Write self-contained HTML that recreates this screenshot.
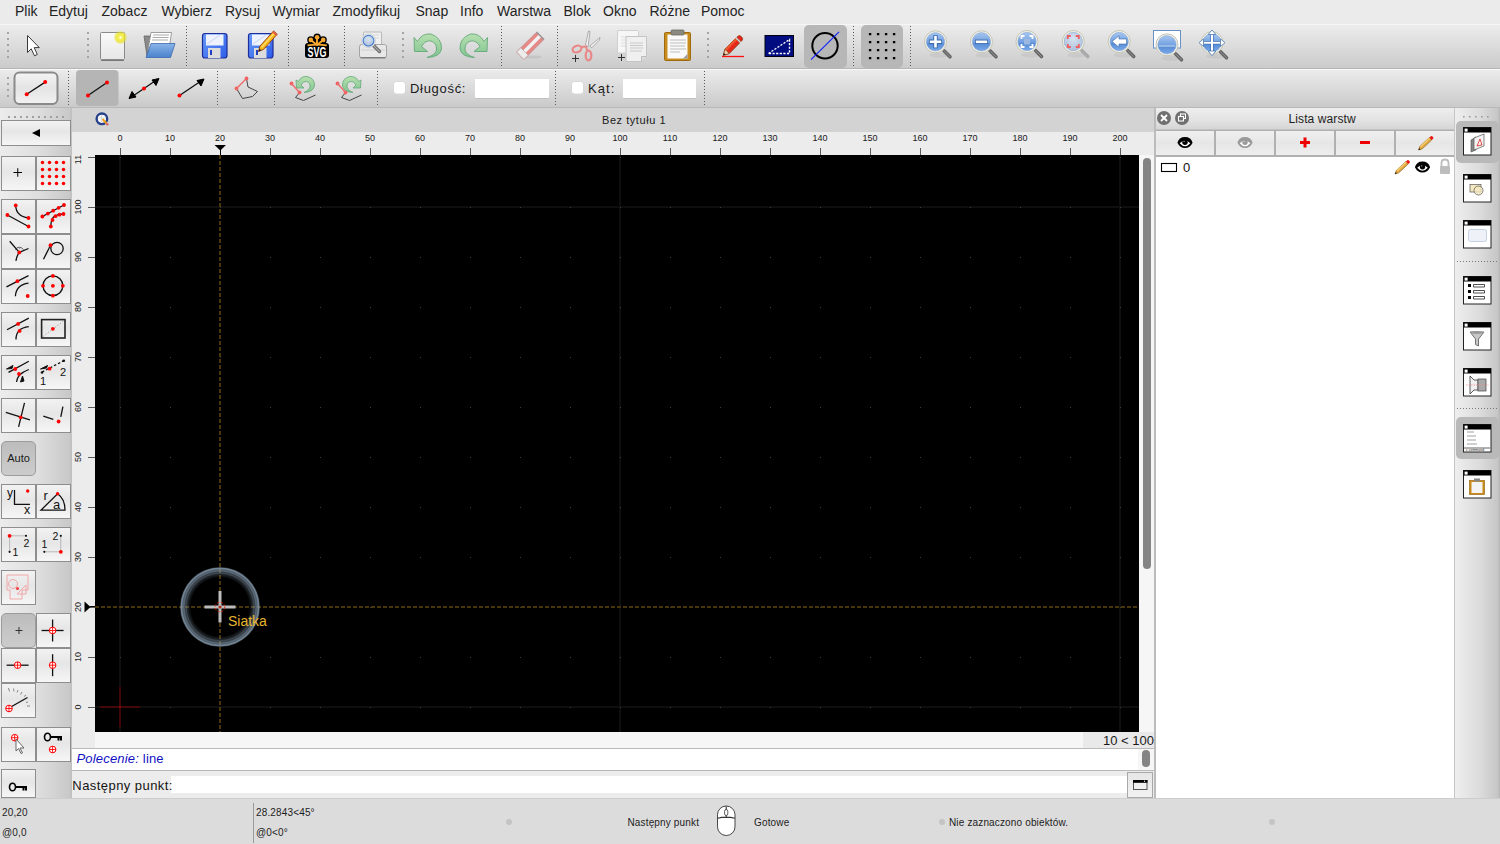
<!DOCTYPE html>
<html><head><meta charset="utf-8">
<style>
*{margin:0;padding:0;box-sizing:border-box}
html,body{width:1500px;height:844px;overflow:hidden;background:#ececec;font-family:"Liberation Sans",sans-serif;color:#222;position:relative}
.a{position:absolute}
#menu{left:0;top:0;width:1500px;height:24px;background:#ebebeb}
#menu span{position:absolute;top:3px;font-size:14px;line-height:16px;color:#232323;white-space:nowrap}
#tb1{left:0;top:24px;width:1500px;height:45px;background:linear-gradient(#f6f6f6 0px,#f6f6f6 1px,#ececec 1px,#cbcbcb 44px,#b6b6b6 44px,#b6b6b6 45px)}
#tb2{left:0;top:69px;width:1500px;height:39px;background:linear-gradient(#f8f8f8 0px,#f8f8f8 1px,#ebebeb 1px,#cacaca 38px,#b8b8b8 38px,#b8b8b8 39px)}
#ldock{left:0;top:108px;width:70px;height:690px;background:linear-gradient(90deg,#ececec,#dedede 55%,#c8c8c8)}
#ldockb{left:70px;top:108px;width:2px;height:690px;background:#c2c2c2}
#ctitle{left:72px;top:108px;width:1082px;height:24px;background:#d3d3d3}
#ruler{left:72px;top:132px;width:1082px;height:616px;background:#ececec}
#canvas{left:95px;top:155px;width:1044px;height:577px;background:#000;overflow:hidden}
#vscroll{left:1139px;top:155px;width:15px;height:577px;background:#f6f6f6}
#hbar{left:95px;top:732px;width:1059px;height:16px;background:#f6f6f6}
#cmdhist{left:72px;top:748px;width:1082px;height:23px;background:#fff;border-top:1px solid #b9b9b9;border-bottom:1px solid #b9b9b9}
#cmdin{left:72px;top:771px;width:1082px;height:27px;background:#ececec}
#cbord{left:1154px;top:108px;width:2px;height:690px;background:#bcbcbc}
#rdock{left:1156px;top:108px;width:298px;height:690px;background:#fff}
#rside{left:1454px;top:108px;width:46px;height:690px;background:linear-gradient(90deg,#f0f0f0,#e2e2e2 50%,#cccccc)}
#status{left:0;top:798px;width:1500px;height:46px;background:#dcdcdc;border-top:1px solid #cdcdcd}
.st{position:absolute;font-size:10px;line-height:12px;color:#1c1c1c;letter-spacing:0.15px;white-space:nowrap}
.rl{position:absolute;font-size:9px;line-height:10px;color:#1a1a1a;white-space:nowrap;text-align:center;width:30px}
.rlv{position:absolute;font-size:9px;line-height:10px;color:#1a1a1a;white-space:nowrap;text-align:center;width:30px;transform:rotate(-90deg)}
.btn{position:absolute;width:35px;height:35px;border:1px solid #8e8e8e;background:linear-gradient(#f2f2f2,#e6e6e6 45%,#f0f0f0 80%,#f6f6f6)}
</style></head><body>
<div id="menu" class="a">
<span style="left:15px">Plik</span>
<span style="left:49px">Edytuj</span>
<span style="left:101.5px">Zobacz</span>
<span style="left:161.5px">Wybierz</span>
<span style="left:225px">Rysuj</span>
<span style="left:272.5px">Wymiar</span>
<span style="left:332.5px">Zmodyfikuj</span>
<span style="left:415.5px">Snap</span>
<span style="left:460px">Info</span>
<span style="left:497px">Warstwa</span>
<span style="left:563.5px">Blok</span>
<span style="left:603px">Okno</span>
<span style="left:649.5px">Różne</span>
<span style="left:701px">Pomoc</span>
</div>
<div id="tb1" class="a"></div>
<div id="tb2" class="a"></div>
<div id="ldock" class="a"></div>
<div id="ldockb" class="a"></div>
<div id="ctitle" class="a"><span class="a" style="left:530px;top:6px;font-size:11px;line-height:12px;color:#1a1a1a;letter-spacing:0.55px">Bez tytułu 1</span></div>
<div id="ruler" class="a"></div>
<div id="canvas" class="a"></div>
<div id="vscroll" class="a"><div class="a" style="left:4px;top:3px;width:8px;height:411px;border-radius:4px;background:#848484"></div></div>
<div id="hbar" class="a"><div class="a" style="left:988px;top:0;width:71px;height:16px;background:#e9e9e9"></div><span class="a" style="right:0;top:1px;font-size:13px;line-height:15px;color:#1a1a1a">10 &lt; 100</span></div>
<div id="cmdhist" class="a"><span class="a" style="left:4.5px;top:2px;font-size:13px;line-height:16px;color:#1212c4;letter-spacing:0.18px"><i>Polecenie:</i> line</span>
<div class="a" style="left:1066px;top:0;width:16px;height:21px;background:#f6f6f6"></div>
<div class="a" style="left:1070px;top:1px;width:8px;height:17px;border-radius:4px;background:#848484"></div></div>
<div id="cmdin" class="a">
<div class="a" style="left:99px;top:5px;width:956px;height:17px;background:#fff"></div>
<span class="a" style="left:0.3px;top:7px;font-size:13px;line-height:15px;color:#141414;letter-spacing:0.44px">Następny punkt:</span>
<div class="a" style="left:1055px;top:1px;width:26px;height:26px;border:1px solid #a8a8a8;background:linear-gradient(#e6e6e6,#f2f2f2)"></div>
</div>
<div id="cbord" class="a"></div>
<div id="rdock" class="a"></div>
<div id="rside" class="a"></div>
<div id="status" class="a">
<span class="st" style="left:2px;top:8px">20,20</span>
<span class="st" style="left:2px;top:28px">@0,0</span>
<div class="a" style="left:253px;top:4px;width:1px;height:40px;background:#9a9a9a"></div>
<span class="st" style="left:256px;top:8px">28.2843&lt;45°</span>
<span class="st" style="left:256px;top:28px">@0&lt;0°</span>
<span class="st" style="left:627.5px;top:18px">Następny punkt</span>
<span class="st" style="left:754px;top:18px">Gotowe</span>
<span class="st" style="left:949px;top:18px">Nie zaznaczono obiektów.</span>
<div class="a" style="left:506px;top:20px;width:6px;height:6px;border-radius:3px;background:#c4c4c4"></div>
<div class="a" style="left:939px;top:20px;width:6px;height:6px;border-radius:3px;background:#c4c4c4"></div>
<div class="a" style="left:1269px;top:20px;width:6px;height:6px;border-radius:3px;background:#c4c4c4"></div>
</div>
<!--SVG1-->
<svg class="a" style="left:0;top:0" width="1500" height="844">
<defs>
<clipPath id="cv"><rect x="95" y="155" width="1044" height="577"/></clipPath>
<clipPath id="lr"><rect x="72" y="155" width="23" height="577"/></clipPath>
<radialGradient id="ring" cx="220" cy="607" r="40" gradientUnits="userSpaceOnUse">
<stop offset="0.73" stop-color="#8aa0b4" stop-opacity="0"/>
<stop offset="0.82" stop-color="#8aa0b4" stop-opacity="0.25"/>
<stop offset="0.9" stop-color="#8aa0b4" stop-opacity="0.5"/>
<stop offset="0.97" stop-color="#8aa0b4" stop-opacity="0.75"/>
<stop offset="1" stop-color="#8aa0b4" stop-opacity="0.3"/>
</radialGradient>
</defs>
<g font-family="Liberation Sans" font-size="9" fill="#1a1a1a">
<text x="120" y="141" text-anchor="middle">0</text>
<text x="170" y="141" text-anchor="middle">10</text>
<text x="220" y="141" text-anchor="middle">20</text>
<text x="270" y="141" text-anchor="middle">30</text>
<text x="320" y="141" text-anchor="middle">40</text>
<text x="370" y="141" text-anchor="middle">50</text>
<text x="420" y="141" text-anchor="middle">60</text>
<text x="470" y="141" text-anchor="middle">70</text>
<text x="520" y="141" text-anchor="middle">80</text>
<text x="570" y="141" text-anchor="middle">90</text>
<text x="620" y="141" text-anchor="middle">100</text>
<text x="670" y="141" text-anchor="middle">110</text>
<text x="720" y="141" text-anchor="middle">120</text>
<text x="770" y="141" text-anchor="middle">130</text>
<text x="820" y="141" text-anchor="middle">140</text>
<text x="870" y="141" text-anchor="middle">150</text>
<text x="920" y="141" text-anchor="middle">160</text>
<text x="970" y="141" text-anchor="middle">170</text>
<text x="1020" y="141" text-anchor="middle">180</text>
<text x="1070" y="141" text-anchor="middle">190</text>
<text x="1120" y="141" text-anchor="middle">200</text>
<path d="M120.5 148V155M170.5 148V155M220.5 148V155M270.5 148V155M320.5 148V155M370.5 148V155M420.5 148V155M470.5 148V155M520.5 148V155M570.5 148V155M620.5 148V155M670.5 148V155M720.5 148V155M770.5 148V155M820.5 148V155M870.5 148V155M920.5 148V155M970.5 148V155M1020.5 148V155M1070.5 148V155M1120.5 148V155" stroke="#5a5a5a" stroke-width="1"/>
<path d="M214.5 145H226L220.3 150.5Z" fill="#000"/><path d="M220.5 150V155" stroke="#000"/>
</g>
<g clip-path="url(#lr)" font-family="Liberation Sans" font-size="9" fill="#1a1a1a">
<text transform="translate(81,707) rotate(-90)" x="0" y="0" text-anchor="middle">0</text>
<text transform="translate(81,657) rotate(-90)" x="0" y="0" text-anchor="middle">10</text>
<text transform="translate(81,607) rotate(-90)" x="0" y="0" text-anchor="middle">20</text>
<text transform="translate(81,557) rotate(-90)" x="0" y="0" text-anchor="middle">30</text>
<text transform="translate(81,507) rotate(-90)" x="0" y="0" text-anchor="middle">40</text>
<text transform="translate(81,457) rotate(-90)" x="0" y="0" text-anchor="middle">50</text>
<text transform="translate(81,407) rotate(-90)" x="0" y="0" text-anchor="middle">60</text>
<text transform="translate(81,357) rotate(-90)" x="0" y="0" text-anchor="middle">70</text>
<text transform="translate(81,307) rotate(-90)" x="0" y="0" text-anchor="middle">80</text>
<text transform="translate(81,257) rotate(-90)" x="0" y="0" text-anchor="middle">90</text>
<text transform="translate(81,207) rotate(-90)" x="0" y="0" text-anchor="middle">100</text>
<text transform="translate(81,157) rotate(-90)" x="0" y="0" text-anchor="middle">110</text>
<path d="M88 707.5H95M88 657.5H95M88 607.5H95M88 557.5H95M88 507.5H95M88 457.5H95M88 407.5H95M88 357.5H95M88 307.5H95M88 257.5H95M88 207.5H95M88 157.5H95" stroke="#5a5a5a" stroke-width="1"/>
<path d="M84.5 601.5V612.5L90.5 607Z" fill="#000"/><path d="M90 606.5H95" stroke="#000"/>
</g>
<g clip-path="url(#cv)">
<path d="M120 155V732M620 155V732M1120 155V732M95 207H1139M95 707H1139" stroke="#0e0e0e" stroke-width="2"/>
<path d="M120 707h1v1h-1zM120 657h1v1h-1zM120 607h1v1h-1zM120 557h1v1h-1zM120 507h1v1h-1zM120 457h1v1h-1zM120 407h1v1h-1zM120 357h1v1h-1zM120 307h1v1h-1zM120 257h1v1h-1zM120 207h1v1h-1zM120 157h1v1h-1zM170 707h1v1h-1zM170 657h1v1h-1zM170 607h1v1h-1zM170 557h1v1h-1zM170 507h1v1h-1zM170 457h1v1h-1zM170 407h1v1h-1zM170 357h1v1h-1zM170 307h1v1h-1zM170 257h1v1h-1zM170 207h1v1h-1zM170 157h1v1h-1zM220 707h1v1h-1zM220 657h1v1h-1zM220 607h1v1h-1zM220 557h1v1h-1zM220 507h1v1h-1zM220 457h1v1h-1zM220 407h1v1h-1zM220 357h1v1h-1zM220 307h1v1h-1zM220 257h1v1h-1zM220 207h1v1h-1zM220 157h1v1h-1zM270 707h1v1h-1zM270 657h1v1h-1zM270 607h1v1h-1zM270 557h1v1h-1zM270 507h1v1h-1zM270 457h1v1h-1zM270 407h1v1h-1zM270 357h1v1h-1zM270 307h1v1h-1zM270 257h1v1h-1zM270 207h1v1h-1zM270 157h1v1h-1zM320 707h1v1h-1zM320 657h1v1h-1zM320 607h1v1h-1zM320 557h1v1h-1zM320 507h1v1h-1zM320 457h1v1h-1zM320 407h1v1h-1zM320 357h1v1h-1zM320 307h1v1h-1zM320 257h1v1h-1zM320 207h1v1h-1zM320 157h1v1h-1zM370 707h1v1h-1zM370 657h1v1h-1zM370 607h1v1h-1zM370 557h1v1h-1zM370 507h1v1h-1zM370 457h1v1h-1zM370 407h1v1h-1zM370 357h1v1h-1zM370 307h1v1h-1zM370 257h1v1h-1zM370 207h1v1h-1zM370 157h1v1h-1zM420 707h1v1h-1zM420 657h1v1h-1zM420 607h1v1h-1zM420 557h1v1h-1zM420 507h1v1h-1zM420 457h1v1h-1zM420 407h1v1h-1zM420 357h1v1h-1zM420 307h1v1h-1zM420 257h1v1h-1zM420 207h1v1h-1zM420 157h1v1h-1zM470 707h1v1h-1zM470 657h1v1h-1zM470 607h1v1h-1zM470 557h1v1h-1zM470 507h1v1h-1zM470 457h1v1h-1zM470 407h1v1h-1zM470 357h1v1h-1zM470 307h1v1h-1zM470 257h1v1h-1zM470 207h1v1h-1zM470 157h1v1h-1zM520 707h1v1h-1zM520 657h1v1h-1zM520 607h1v1h-1zM520 557h1v1h-1zM520 507h1v1h-1zM520 457h1v1h-1zM520 407h1v1h-1zM520 357h1v1h-1zM520 307h1v1h-1zM520 257h1v1h-1zM520 207h1v1h-1zM520 157h1v1h-1zM570 707h1v1h-1zM570 657h1v1h-1zM570 607h1v1h-1zM570 557h1v1h-1zM570 507h1v1h-1zM570 457h1v1h-1zM570 407h1v1h-1zM570 357h1v1h-1zM570 307h1v1h-1zM570 257h1v1h-1zM570 207h1v1h-1zM570 157h1v1h-1zM620 707h1v1h-1zM620 657h1v1h-1zM620 607h1v1h-1zM620 557h1v1h-1zM620 507h1v1h-1zM620 457h1v1h-1zM620 407h1v1h-1zM620 357h1v1h-1zM620 307h1v1h-1zM620 257h1v1h-1zM620 207h1v1h-1zM620 157h1v1h-1zM670 707h1v1h-1zM670 657h1v1h-1zM670 607h1v1h-1zM670 557h1v1h-1zM670 507h1v1h-1zM670 457h1v1h-1zM670 407h1v1h-1zM670 357h1v1h-1zM670 307h1v1h-1zM670 257h1v1h-1zM670 207h1v1h-1zM670 157h1v1h-1zM720 707h1v1h-1zM720 657h1v1h-1zM720 607h1v1h-1zM720 557h1v1h-1zM720 507h1v1h-1zM720 457h1v1h-1zM720 407h1v1h-1zM720 357h1v1h-1zM720 307h1v1h-1zM720 257h1v1h-1zM720 207h1v1h-1zM720 157h1v1h-1zM770 707h1v1h-1zM770 657h1v1h-1zM770 607h1v1h-1zM770 557h1v1h-1zM770 507h1v1h-1zM770 457h1v1h-1zM770 407h1v1h-1zM770 357h1v1h-1zM770 307h1v1h-1zM770 257h1v1h-1zM770 207h1v1h-1zM770 157h1v1h-1zM820 707h1v1h-1zM820 657h1v1h-1zM820 607h1v1h-1zM820 557h1v1h-1zM820 507h1v1h-1zM820 457h1v1h-1zM820 407h1v1h-1zM820 357h1v1h-1zM820 307h1v1h-1zM820 257h1v1h-1zM820 207h1v1h-1zM820 157h1v1h-1zM870 707h1v1h-1zM870 657h1v1h-1zM870 607h1v1h-1zM870 557h1v1h-1zM870 507h1v1h-1zM870 457h1v1h-1zM870 407h1v1h-1zM870 357h1v1h-1zM870 307h1v1h-1zM870 257h1v1h-1zM870 207h1v1h-1zM870 157h1v1h-1zM920 707h1v1h-1zM920 657h1v1h-1zM920 607h1v1h-1zM920 557h1v1h-1zM920 507h1v1h-1zM920 457h1v1h-1zM920 407h1v1h-1zM920 357h1v1h-1zM920 307h1v1h-1zM920 257h1v1h-1zM920 207h1v1h-1zM920 157h1v1h-1zM970 707h1v1h-1zM970 657h1v1h-1zM970 607h1v1h-1zM970 557h1v1h-1zM970 507h1v1h-1zM970 457h1v1h-1zM970 407h1v1h-1zM970 357h1v1h-1zM970 307h1v1h-1zM970 257h1v1h-1zM970 207h1v1h-1zM970 157h1v1h-1zM1020 707h1v1h-1zM1020 657h1v1h-1zM1020 607h1v1h-1zM1020 557h1v1h-1zM1020 507h1v1h-1zM1020 457h1v1h-1zM1020 407h1v1h-1zM1020 357h1v1h-1zM1020 307h1v1h-1zM1020 257h1v1h-1zM1020 207h1v1h-1zM1020 157h1v1h-1zM1070 707h1v1h-1zM1070 657h1v1h-1zM1070 607h1v1h-1zM1070 557h1v1h-1zM1070 507h1v1h-1zM1070 457h1v1h-1zM1070 407h1v1h-1zM1070 357h1v1h-1zM1070 307h1v1h-1zM1070 257h1v1h-1zM1070 207h1v1h-1zM1070 157h1v1h-1zM1120 707h1v1h-1zM1120 657h1v1h-1zM1120 607h1v1h-1zM1120 557h1v1h-1zM1120 507h1v1h-1zM1120 457h1v1h-1zM1120 407h1v1h-1zM1120 357h1v1h-1zM1120 307h1v1h-1zM1120 257h1v1h-1zM1120 207h1v1h-1zM1120 157h1v1h-1z" fill="#3e3e3e"/>
<path d="M100 707H140M120 687V727" stroke="#460707" stroke-width="1.8"/><circle cx="120" cy="707" r="1" fill="#7a1010"/>
<path d="M95 607H1139M220 155V732" stroke="#47360a" stroke-width="2" stroke-dasharray="4 2"/>
<circle cx="220" cy="607" r="40" fill="url(#ring)"/><circle cx="220" cy="607" r="38.6" fill="none" stroke="#7d92a4" stroke-width="1" opacity="0.7"/><circle cx="220" cy="607" r="36.2" fill="none" stroke="#7d92a4" stroke-width="0.8" opacity="0.5"/><circle cx="220" cy="607" r="33.8" fill="none" stroke="#7d92a4" stroke-width="0.7" opacity="0.35"/>
<path d="M204.5 607H235.5M220 591V622.5" stroke="#bdbdbd" stroke-width="3"/>
<circle cx="220" cy="607" r="4.8" fill="none" stroke="#d02810" stroke-width="1" stroke-dasharray="2.2 1.6"/>
<circle cx="220" cy="607" r="1.6" fill="#b03018"/>
<text x="228" y="625.5" font-family="Liberation Sans" font-size="14" fill="#e6b62e">Siatka</text>
</g>
<circle cx="101.9" cy="118.8" r="5.3" fill="#fafafa" stroke="#26408a" stroke-width="2.4"/><path d="M99 118H105M101.5 115V122" stroke="#c8c8c8" stroke-width="0.6"/><path d="M102.5 119L106.5 123.5" stroke="#f0a020" stroke-width="2"/><circle cx="107.3" cy="124.3" r="1.2" fill="#e06060"/>
<rect x="1133.5" y="780.5" width="13.5" height="9" fill="#f0f0f0" stroke="#555" stroke-width="1"/><rect x="1133" y="780" width="14.5" height="2.8" fill="#000"/><circle cx="1144.5" cy="781.2" r="0.6" fill="#fff"/>
<rect x="717.5" y="806" width="17.5" height="29.5" rx="8.7" fill="#fff" stroke="#333" stroke-width="0.9"/><path d="M717.6 818.2Q726.2 816 735 818.2M726.2 806.2V818" stroke="#333" stroke-width="1.1" fill="none"/><rect x="724.6" y="809.5" width="3.2" height="6" rx="1.6" fill="#fff" stroke="#333" stroke-width="0.8"/>
</svg>
<!--/SVG1-->
<div class="btn" style="left:1px;top:120px;width:70px;height:26px"></div>
<div class="btn" style="left:1px;top:156px;width:35px;height:35px"></div>
<div class="btn" style="left:36px;top:156px;width:35px;height:35px"></div>
<div class="btn" style="left:1px;top:199px;width:35px;height:35px"></div>
<div class="btn" style="left:36px;top:199px;width:35px;height:35px"></div>
<div class="btn" style="left:1px;top:234px;width:35px;height:35px"></div>
<div class="btn" style="left:36px;top:234px;width:35px;height:35px"></div>
<div class="btn" style="left:1px;top:269px;width:35px;height:35px"></div>
<div class="btn" style="left:36px;top:269px;width:35px;height:35px"></div>
<div class="btn" style="left:1px;top:312px;width:35px;height:35px"></div>
<div class="btn" style="left:36px;top:312px;width:35px;height:35px"></div>
<div class="btn" style="left:1px;top:355px;width:35px;height:35px"></div>
<div class="btn" style="left:36px;top:355px;width:35px;height:35px"></div>
<div class="btn" style="left:1px;top:398px;width:35px;height:35px"></div>
<div class="btn" style="left:36px;top:398px;width:35px;height:35px"></div>
<div class="btn" style="left:1px;top:484px;width:35px;height:35px"></div>
<div class="btn" style="left:36px;top:484px;width:35px;height:35px"></div>
<div class="btn" style="left:1px;top:527px;width:35px;height:35px"></div>
<div class="btn" style="left:36px;top:527px;width:35px;height:35px"></div>
<div class="btn" style="left:1px;top:648px;width:35px;height:35px"></div>
<div class="btn" style="left:36px;top:648px;width:35px;height:35px"></div>
<div class="btn" style="left:1px;top:727px;width:35px;height:35px"></div>
<div class="btn" style="left:36px;top:727px;width:35px;height:35px"></div>
<div class="btn" style="left:1px;top:570px;width:35px;height:35px"></div>
<div class="btn" style="left:36px;top:613px;width:35px;height:35px"></div>
<div class="btn" style="left:1px;top:683px;width:35px;height:35px"></div>
<div class="btn" style="left:1px;top:769px;width:35px;height:29px"></div>
<div class="a" style="left:1px;top:441px;width:35px;height:35px;border:1px solid #9c9c9c;border-radius:5px;background:linear-gradient(#bcbcbc,#c6c6c6 60%,#cccccc)"></div>
<div class="a" style="left:1px;top:613px;width:35px;height:35px;border:1px solid #9c9c9c;border-radius:5px;background:linear-gradient(#bcbcbc,#c6c6c6 60%,#cccccc)"></div>
<svg class="a" style="left:0;top:0" width="1500" height="844"><path d="M8 116h2v2h-2zM14 116h2v2h-2zM20 116h2v2h-2zM26 116h2v2h-2zM32 116h2v2h-2zM38 116h2v2h-2zM44 116h2v2h-2zM50 116h2v2h-2zM56 116h2v2h-2zM62 116h2v2h-2z" fill="#a0a0a0"/><path d="M32 133L40 129V137Z" fill="#000"/><g transform="translate(1,156)"><path d="M12.5 16.5H21M16.75 12.25V20.75" stroke="#000" stroke-width="1"/></g><g transform="translate(36,156)"><circle cx="6.5" cy="6.4" r="1.75" fill="#ff0000"/><circle cx="6.5" cy="13.4" r="1.75" fill="#ff0000"/><circle cx="6.5" cy="20.4" r="1.75" fill="#ff0000"/><circle cx="6.5" cy="27.4" r="1.75" fill="#ff0000"/><circle cx="13.5" cy="6.4" r="1.75" fill="#ff0000"/><circle cx="13.5" cy="13.4" r="1.75" fill="#ff0000"/><circle cx="13.5" cy="20.4" r="1.75" fill="#ff0000"/><circle cx="13.5" cy="27.4" r="1.75" fill="#ff0000"/><circle cx="20.5" cy="6.4" r="1.75" fill="#ff0000"/><circle cx="20.5" cy="13.4" r="1.75" fill="#ff0000"/><circle cx="20.5" cy="20.4" r="1.75" fill="#ff0000"/><circle cx="20.5" cy="27.4" r="1.75" fill="#ff0000"/><circle cx="27.5" cy="6.4" r="1.75" fill="#ff0000"/><circle cx="27.5" cy="13.4" r="1.75" fill="#ff0000"/><circle cx="27.5" cy="20.4" r="1.75" fill="#ff0000"/><circle cx="27.5" cy="27.4" r="1.75" fill="#ff0000"/></g><g transform="translate(1,199)"><path d="M6.4 16L27.5 27.5M14.7 6.4Q15 17 27.5 19" stroke="#111" stroke-width="1.3" fill="none"/><circle cx="6.4" cy="16" r="1.9" fill="#ff0000"/><circle cx="27.5" cy="27.5" r="1.9" fill="#ff0000"/><circle cx="14.7" cy="6.4" r="1.9" fill="#ff0000"/><circle cx="27.5" cy="19" r="1.9" fill="#ff0000"/></g><g transform="translate(36,199)"><path d="M6.4 17.5L28 6M14.8 27.5Q15 20 18 17.5Q22 15 27.5 15" stroke="#111" stroke-width="1.3" fill="none"/><circle cx="6.4" cy="17.5" r="1.9" fill="#ff0000"/><circle cx="11.8" cy="14.6" r="1.9" fill="#ff0000"/><circle cx="17.2" cy="11.7" r="1.9" fill="#ff0000"/><circle cx="22.6" cy="8.8" r="1.9" fill="#ff0000"/><circle cx="28" cy="6" r="1.9" fill="#ff0000"/><circle cx="14.8" cy="27.5" r="1.9" fill="#ff0000"/><circle cx="16.5" cy="21" r="1.9" fill="#ff0000"/><circle cx="19.5" cy="17.2" r="1.9" fill="#ff0000"/><circle cx="23.5" cy="15.7" r="1.9" fill="#ff0000"/><circle cx="27.5" cy="15" r="1.9" fill="#ff0000"/></g><g transform="translate(1,234)"><path d="M8.7 7.3L18.3 18.4M18.3 18.4Q16 21 14.9 26.9M18.3 18.4L27.5 14.5" stroke="#111" stroke-width="1.3" fill="none"/><path d="M14 15.5Q18.5 11 22.5 15.5" stroke="#222" stroke-width="0.7" fill="none"/><circle cx="18.5" cy="14.5" r="0.4" fill="#222"/><circle cx="18.3" cy="18.4" r="1.9" fill="#ff0000"/></g><g transform="translate(36,234)"><circle cx="21" cy="14.5" r="6.2" stroke="#111" stroke-width="1.3" fill="none"/><path d="M7.5 25.3L14.5 11.2" stroke="#111" stroke-width="1.3" fill="none"/><circle cx="14.5" cy="11.2" r="1.9" fill="#ff0000"/></g><g transform="translate(1,269)"><path d="M5.5 17.8L27.5 6.7M14.4 27.3Q15 16 27.5 14.2" stroke="#111" stroke-width="1.3" fill="none"/><circle cx="16.4" cy="12.2" r="1.9" fill="#ff0000"/><circle cx="26.7" cy="27" r="1.9" fill="#ff0000"/></g><g transform="translate(36,269)"><circle cx="16.9" cy="16.8" r="9.9" stroke="#111" stroke-width="1.3" fill="none"/><circle cx="16.9" cy="16.8" r="1.9" fill="#ff0000"/><circle cx="16.9" cy="6.9" r="1.9" fill="#ff0000"/><circle cx="16.9" cy="26.7" r="1.9" fill="#ff0000"/><circle cx="7" cy="16.8" r="1.9" fill="#ff0000"/><circle cx="26.8" cy="16.8" r="1.9" fill="#ff0000"/></g><g transform="translate(1,312)"><path d="M6 17.8L27.8 6.1M15 27.4Q15 16 27.8 14.6" stroke="#111" stroke-width="1.3" fill="none"/><circle cx="17.1" cy="11.9" r="1.9" fill="#ff0000"/><circle cx="18.6" cy="18.9" r="1.9" fill="#ff0000"/></g><g transform="translate(36,312)"><rect x="5.6" y="7.6" width="23.4" height="18.4" stroke="#222" stroke-width="1.6" fill="none"/><path d="M7 24.5L27.5 9" stroke="#999" stroke-width="0.8" stroke-dasharray="1.5 1.5"/><circle cx="16.9" cy="16.8" r="1.9" fill="#ff0000"/></g><g transform="translate(1,355)"><path d="M7.5 17.4L27.8 6.2M15.5 27Q16 19 27.8 14.5" stroke="#111" stroke-width="1.3" fill="none"/><path d="M5.5 14L12 10.5L11 13.5Z" fill="#111" stroke="#111"/><path d="M19.5 27L21.5 21L23 26Z" fill="#111" stroke="#111"/><circle cx="14.3" cy="14" r="1.9" fill="#ff0000"/><circle cx="18" cy="19" r="1.9" fill="#ff0000"/></g><g transform="translate(36,355)"><path d="M6 17L27.8 5.7" stroke="#111" stroke-width="1.3" stroke-dasharray="2.5 2"/><path d="M4.5 14L11.5 10.5L10.5 13Z" fill="#111" stroke="#111"/><circle cx="27.8" cy="5.7" r="1.3" fill="#111"/><circle cx="6" cy="17.5" r="1.3" fill="#111"/><circle cx="13.6" cy="13.7" r="1.9" fill="#ff0000"/><text x="24" y="20.5" font-size="11" font-family="Liberation Sans" fill="#111">2</text><text x="4" y="30" font-size="11" font-family="Liberation Sans" fill="#111">1</text></g><g transform="translate(1,398)"><path d="M4.8 14.4L28.9 21.8M23.5 4.8L17.6 28.9" stroke="#111" stroke-width="1.3" fill="none"/><circle cx="19.7" cy="19.3" r="1.9" fill="#ff0000"/></g><g transform="translate(36,398)"><path d="M7.3 18.2L17.3 21.4M26.9 8.6L24.8 18.8" stroke="#111" stroke-width="1.3" fill="none"/><circle cx="22.6" cy="23.5" r="1.9" fill="#ff0000"/></g><text x="18.5" y="462" text-anchor="middle" font-size="11" font-family="Liberation Sans" fill="#1a1a1a">Auto</text><g transform="translate(1,484)"><path d="M13.5 6V20.4H28.9" stroke="#111" stroke-width="1.3" fill="none"/><text x="6" y="12.5" font-size="12" font-family="Liberation Sans" fill="#111">y</text><text x="23" y="29.5" font-size="12.5" font-family="Liberation Sans" fill="#111">x</text><circle cx="26.7" cy="7" r="1.7" fill="#ff0000"/></g><g transform="translate(36,484)"><path d="M4.9 26.2L21.6 9.8Q29 15 29 26.2Z" stroke="#111" stroke-width="1.3" fill="none"/><text x="7.5" y="16" font-size="13" font-family="Liberation Sans" fill="#111">r</text><text x="17" y="25" font-size="13" font-family="Liberation Sans" fill="#111">a</text><circle cx="21.6" cy="9.8" r="1.7" fill="#ff0000"/></g><g transform="translate(1,527)"><path d="M8.6 8.8H25M8.6 8.8V24.8" stroke="#aaa" stroke-width="0.8" fill="none"/><circle cx="8.6" cy="8.8" r="1.9" fill="#ff0000"/><circle cx="25" cy="8.8" r="1.1" fill="#111"/><circle cx="8.6" cy="24.8" r="1.1" fill="#111"/><text x="22.5" y="20" font-size="10.5" font-family="Liberation Sans" fill="#111">2</text><text x="11.5" y="28.5" font-size="10.5" font-family="Liberation Sans" fill="#111">1</text></g><g transform="translate(36,527)"><path d="M24.8 8.8V24.8H8.3" stroke="#aaa" stroke-width="0.8" fill="none"/><circle cx="24.8" cy="24.8" r="1.9" fill="#ff0000"/><circle cx="24.8" cy="8.8" r="1.1" fill="#111"/><circle cx="8.3" cy="24.8" r="1.1" fill="#111"/><text x="16.5" y="13" font-size="10.5" font-family="Liberation Sans" fill="#111">2</text><text x="5.5" y="20.5" font-size="10.5" font-family="Liberation Sans" fill="#111">1</text></g><g transform="translate(1,570)"><path d="M6 5H27V20H21V29H9V20H6Z" fill="none" stroke="#f0a0a0" stroke-width="0.9"/><circle cx="12" cy="14" r="4.5" fill="none" stroke="#f0a0a0" stroke-width="0.9"/><path d="M16 24L25 15V24Z" fill="none" stroke="#f0a0a0" stroke-width="0.9"/><circle cx="16.5" cy="18.5" r="1.6" fill="#f04040"/></g><g transform="translate(1,613)"><path d="M14.5 17.5H21.5M18 14V21" stroke="#333" stroke-width="1"/></g><g transform="translate(36,613)"><path d="M5.600000000000001 17.5H27.6" stroke="#111" stroke-width="1.3"/><path d="M16.6 6.5V28.5" stroke="#111" stroke-width="1.3"/><circle cx="16.6" cy="17.5" r="3.3" fill="#fff" stroke="#ff0000" stroke-width="1"/><path d="M13.3 17.5H19.900000000000002M16.6 14.2V20.8" stroke="#ff0000" stroke-width="0.9"/></g><g transform="translate(1,648)"><path d="M5.600000000000001 17.2H27.6" stroke="#111" stroke-width="1.3"/><circle cx="16.6" cy="17.2" r="3.3" fill="#fff" stroke="#ff0000" stroke-width="1"/><path d="M13.3 17.2H19.900000000000002M16.6 13.899999999999999V20.5" stroke="#ff0000" stroke-width="0.9"/></g><g transform="translate(36,648)"><path d="M16.6 6.199999999999999V28.2" stroke="#111" stroke-width="1.3"/><circle cx="16.6" cy="17.2" r="3.3" fill="#fff" stroke="#ff0000" stroke-width="1"/><path d="M13.3 17.2H19.900000000000002M16.6 13.899999999999999V20.5" stroke="#ff0000" stroke-width="0.9"/></g><g transform="translate(1,683)"><path d="M8 25L26.5 14.5" stroke="#111" stroke-width="1.3"/><path d="M7.5 5L8.5 8.5M12.5 5.5L13 8.5M17 7L16 9.5M21 9L19.5 11.5M25 12L23 13.5M27 19L25 19.5M29 23H26" stroke="#888" stroke-width="1"/><circle cx="8" cy="25.5" r="3.3" fill="#fff" stroke="#ff0000" stroke-width="1"/><path d="M4.7 25.5H11.3M8 22.2V28.8" stroke="#ff0000" stroke-width="0.9"/></g><g transform="translate(1,727)"><circle cx="13.7" cy="10.7" r="3.3" fill="#fff" stroke="#ff0000" stroke-width="1"/><path d="M10.4 10.7H17M13.7 7.4V14" stroke="#ff0000" stroke-width="0.9"/><path d="M15 12V24L17.5 21.5L20 26.5L21.5 25.8L19 21H23Z" fill="#fff" stroke="#555" stroke-width="0.9"/></g><g transform="translate(36,727)"><g transform="translate(8,6)"><ellipse cx="3.5" cy="4" rx="3" ry="3.8" fill="none" stroke="#000" stroke-width="1.6"/><path d="M6.5 4H18M14.5 4V7.5M17 4V7.5" stroke="#000" stroke-width="2"/></g><circle cx="16.6" cy="22.5" r="3.3" fill="#fff" stroke="#ff0000" stroke-width="1"/><path d="M13.3 22.5H19.9M16.6 19.2V25.8" stroke="#ff0000" stroke-width="0.9"/></g><g transform="translate(1,769)"><g transform="translate(8,14)"><ellipse cx="3.5" cy="4" rx="3" ry="3.8" fill="none" stroke="#000" stroke-width="1.6"/><path d="M6.5 4H18M14.5 4V7.5M17 4V7.5" stroke="#000" stroke-width="2"/></g></g></svg>
<svg class="a" style="left:0;top:0" width="1500" height="110"><path d="M7 32h2v2h-2zM7 38h2v2h-2zM7 44h2v2h-2zM7 50h2v2h-2zM7 56h2v2h-2z" fill="#a4a4a4"/><path d="M87 32h2v2h-2zM87 38h2v2h-2zM87 44h2v2h-2zM87 50h2v2h-2zM87 56h2v2h-2z" fill="#a4a4a4"/><path d="M402 32h2v2h-2zM402 38h2v2h-2zM402 44h2v2h-2zM402 50h2v2h-2zM402 56h2v2h-2z" fill="#a4a4a4"/><path d="M707 32h2v2h-2zM707 38h2v2h-2zM707 44h2v2h-2zM707 50h2v2h-2zM707 56h2v2h-2z" fill="#a4a4a4"/><path d="M186 26h1v1h-1zM186 29h1v1h-1zM186 32h1v1h-1zM186 35h1v1h-1zM186 38h1v1h-1zM186 41h1v1h-1zM186 44h1v1h-1zM186 47h1v1h-1zM186 50h1v1h-1zM186 53h1v1h-1zM186 56h1v1h-1zM186 59h1v1h-1zM186 62h1v1h-1zM186 65h1v1h-1z" fill="#5a5a5a"/><path d="M288 26h1v1h-1zM288 29h1v1h-1zM288 32h1v1h-1zM288 35h1v1h-1zM288 38h1v1h-1zM288 41h1v1h-1zM288 44h1v1h-1zM288 47h1v1h-1zM288 50h1v1h-1zM288 53h1v1h-1zM288 56h1v1h-1zM288 59h1v1h-1zM288 62h1v1h-1zM288 65h1v1h-1z" fill="#5a5a5a"/><path d="M344 26h1v1h-1zM344 29h1v1h-1zM344 32h1v1h-1zM344 35h1v1h-1zM344 38h1v1h-1zM344 41h1v1h-1zM344 44h1v1h-1zM344 47h1v1h-1zM344 50h1v1h-1zM344 53h1v1h-1zM344 56h1v1h-1zM344 59h1v1h-1zM344 62h1v1h-1zM344 65h1v1h-1z" fill="#5a5a5a"/><path d="M501 26h1v1h-1zM501 29h1v1h-1zM501 32h1v1h-1zM501 35h1v1h-1zM501 38h1v1h-1zM501 41h1v1h-1zM501 44h1v1h-1zM501 47h1v1h-1zM501 50h1v1h-1zM501 53h1v1h-1zM501 56h1v1h-1zM501 59h1v1h-1zM501 62h1v1h-1zM501 65h1v1h-1z" fill="#5a5a5a"/><path d="M557 26h1v1h-1zM557 29h1v1h-1zM557 32h1v1h-1zM557 35h1v1h-1zM557 38h1v1h-1zM557 41h1v1h-1zM557 44h1v1h-1zM557 47h1v1h-1zM557 50h1v1h-1zM557 53h1v1h-1zM557 56h1v1h-1zM557 59h1v1h-1zM557 62h1v1h-1zM557 65h1v1h-1z" fill="#5a5a5a"/><path d="M853 26h1v1h-1zM853 29h1v1h-1zM853 32h1v1h-1zM853 35h1v1h-1zM853 38h1v1h-1zM853 41h1v1h-1zM853 44h1v1h-1zM853 47h1v1h-1zM853 50h1v1h-1zM853 53h1v1h-1zM853 56h1v1h-1zM853 59h1v1h-1zM853 62h1v1h-1zM853 65h1v1h-1z" fill="#5a5a5a"/><path d="M910 26h1v1h-1zM910 29h1v1h-1zM910 32h1v1h-1zM910 35h1v1h-1zM910 38h1v1h-1zM910 41h1v1h-1zM910 44h1v1h-1zM910 47h1v1h-1zM910 50h1v1h-1zM910 53h1v1h-1zM910 56h1v1h-1zM910 59h1v1h-1zM910 62h1v1h-1zM910 65h1v1h-1z" fill="#5a5a5a"/><rect x="804" y="25" width="43" height="43" rx="5" fill="#b7b7b7"/><rect x="861" y="25" width="42" height="43" rx="5" fill="#b7b7b7"/><path d="M27.5 35.5V52.5L31.2 48.8L34.5 55.8L37.3 54.5L34.2 47.6H39.3Z" fill="#fff" stroke="#3a3a3a" stroke-width="1" stroke-linejoin="round"/><defs><linearGradient id="pg" x1="0" y1="0" x2="0" y2="1"><stop offset="0" stop-color="#fafafa"/><stop offset="1" stop-color="#e6e6e6"/></linearGradient><radialGradient id="glow"><stop offset="0" stop-color="#fffff0"/><stop offset="0.35" stop-color="#f4ee40"/><stop offset="0.7" stop-color="#e8e020" stop-opacity="0.7"/><stop offset="1" stop-color="#e8e020" stop-opacity="0"/></radialGradient><linearGradient id="blu" x1="0" y1="0" x2="0" y2="1"><stop offset="0" stop-color="#8ab4e8"/><stop offset="1" stop-color="#4a82cc"/></linearGradient><linearGradient id="flop" x1="0" y1="0" x2="1" y2="1"><stop offset="0" stop-color="#6a9cf8"/><stop offset="1" stop-color="#2c5ce8"/></linearGradient><linearGradient id="zb" x1="0" y1="0" x2="0" y2="1"><stop offset="0" stop-color="#a8c6f0"/><stop offset="0.55" stop-color="#6e9ee0"/><stop offset="0.6" stop-color="#5a8cd6"/><stop offset="1" stop-color="#78aaea"/></linearGradient><radialGradient id="zr" cx="0.5" cy="0.35" r="0.7"><stop offset="0" stop-color="#d8e4f2"/><stop offset="1" stop-color="#a8bcd8"/></radialGradient><linearGradient id="grn" x1="0" y1="0" x2="0" y2="1"><stop offset="0" stop-color="#b8e0b0"/><stop offset="1" stop-color="#80c490"/></linearGradient></defs><rect x="100.5" y="32.5" width="24" height="27" rx="1" fill="url(#pg)" stroke="#8a8a8a"/><path d="M101 60.5H124" stroke="#777" stroke-width="1"/><circle cx="120.5" cy="37.5" r="7" fill="url(#glow)"/><path d="M144 36H152L154 38H164V56H147Z" fill="#8a8a8a" stroke="#666" stroke-width="0.8"/><path d="M151 32.5H171.5L169 50H148Z" fill="#fff" stroke="#888" stroke-width="0.8"/><path d="M153 35H169M152.5 37.5H168.5M152 40H168" stroke="#aaa" stroke-width="1"/><path d="M151 43.5H175L170.5 57.5H146Z" fill="url(#blu)" stroke="#3a6ab0" stroke-width="0.8"/><rect x="202.5" y="33.5" width="24.5" height="24.5" rx="2.5" fill="url(#flop)" stroke="#1c2c9c" stroke-width="1.2"/><rect x="206" y="34.5" width="17.5" height="11" fill="#eef2fc"/><path d="M207 44L220 35" stroke="#c8d4f4" stroke-width="1"/><rect x="208" y="48" width="12.5" height="10" fill="#dcdcdc"/><rect x="210" y="50" width="2" height="5" fill="#2040c0"/><rect x="248.5" y="33.5" width="24.5" height="24.5" rx="2.5" fill="url(#flop)" stroke="#1c2c9c" stroke-width="1.2"/><rect x="252" y="34.5" width="17.5" height="11" fill="#eef2fc"/><path d="M253 44L266 35" stroke="#c8d4f4" stroke-width="1"/><rect x="254" y="48" width="12.5" height="10" fill="#dcdcdc"/><rect x="256" y="50" width="2" height="5" fill="#2040c0"/><path d="M258.5 51.5L259.9 46.1L273.6 30.9L277.3 34.2L263.6 49.4Z" fill="#f6b418" stroke="#8a2a10" stroke-width="0.8" stroke-linejoin="round"/><path d="M261.5 47.5L275 32.5" stroke="#fce070" stroke-width="1.2"/><path d="M272.8 31.7L276.6 35.1" stroke="#e86040" stroke-width="2"/><path d="M258.5 51.5L259.3 48.6L261.3 50.4Z" fill="#222"/><rect x="305" y="43" width="24" height="15" rx="3" fill="#000"/><circle cx="317.1" cy="37.2" r="3.6" fill="#000"/><circle cx="310.8" cy="39.9" r="3.6" fill="#000"/><circle cx="323.2" cy="39.9" r="3.6" fill="#000"/><path d="M307 45L311 38L317 35L323 38L327 45Z" fill="#000"/><g stroke="#f7a830" stroke-width="1.9" stroke-linecap="round"><path d="M317 45V37.2M317 45L310.8 39.9M317 45L323.2 39.9"/></g><circle cx="317.1" cy="37.2" r="2.3" fill="#f7a830"/><circle cx="310.8" cy="39.9" r="2.3" fill="#f7a830"/><circle cx="323.2" cy="39.9" r="2.3" fill="#f7a830"/><path d="M307.5 45.3Q317 43.8 326.8 45.3" stroke="#f7a830" stroke-width="1.7" fill="none"/><text transform="translate(317,56.8) scale(0.64,1)" x="0" y="0" text-anchor="middle" font-family="Liberation Sans" font-weight="bold" font-size="14" fill="#fff">SVG</text><rect x="363.5" y="32" width="18" height="15" rx="1" fill="#f0f0f0" stroke="#b8b8b8"/><path d="M366 35H379M366 38H379" stroke="#d8d8d8"/><path d="M361.5 44.5H384.5Q386.5 44.5 386.5 47V56Q386.5 57.5 384.5 57.5H361.5Q359.5 57.5 359.5 56V47Q359.5 44.5 361.5 44.5Z" fill="#e8e8e8" stroke="#a4a4a4"/><path d="M361 50H385" stroke="#cfcfcf"/><path d="M360.5 57.8H385.5" stroke="#7a7a7a" stroke-width="1.4"/><path d="M373 45L379.5 51.5" stroke="#6a6a6a" stroke-width="3.4" stroke-linecap="round"/><path d="M373 45L379.5 51.5" stroke="#a8a8a8" stroke-width="1.2" stroke-linecap="round"/><circle cx="368.5" cy="40.7" r="6.9" fill="#fafafa" stroke="#c8c8c8" stroke-width="0.8"/><circle cx="368.5" cy="40.7" r="5.4" fill="url(#zr)" stroke="#4a80d0" stroke-width="1.2"/><path d="M414 37.5L414.5 51.5L427.5 51.5L421.5 46.5Q425 40 431 41Q437 43 436.5 50Q435.5 55 427 57.5Q440 57 441.5 49Q442 38 431 34Q422 33 417.5 41.5Z" fill="url(#grn)" stroke="#64a878" stroke-width="0.9" stroke-linejoin="round"/><path d="M487.5 37.5L487 51.5L474 51.5L480 46.5Q476.5 40 470.5 41Q464.5 43 465 50Q466 55 474.5 57.5Q461.5 57 460 49Q459.5 38 470.5 34Q479.5 33 484 41.5Z" fill="url(#grn)" stroke="#64a878" stroke-width="0.9" stroke-linejoin="round"/><ellipse cx="531" cy="57" rx="11" ry="1.6" fill="#000" opacity="0.07"/><path d="M530 33L546 33.5L534 56L518 52Z" fill="none"/><g transform="translate(530.5,45.5) rotate(-45)"><rect x="-14.5" y="-5.2" width="28.5" height="10.4" rx="1" fill="#e48888" stroke="#c88080" stroke-width="0.6"/><rect x="-14.5" y="-1.8" width="28.5" height="3.6" fill="#f2f0f0"/><rect x="-14.5" y="-5.2" width="6" height="10.4" fill="#ececec" stroke="#b89898" stroke-width="0.6"/><rect x="13" y="-5.2" width="1.5" height="10.4" fill="#999"/></g><path d="M588.5 31L585.5 45L588 47L590 31.5Z" fill="#f4f4f4" stroke="#9a9a9a" stroke-width="0.8"/><path d="M590 46L600 37.5L599.5 40L591.5 48Z" fill="#f4f4f4" stroke="#9a9a9a" stroke-width="0.8"/><ellipse cx="577" cy="49" rx="4.5" ry="3.2" fill="none" stroke="#e88888" stroke-width="2.2" transform="rotate(-20 577 49)"/><ellipse cx="588.5" cy="55.5" rx="2.8" ry="4.8" fill="none" stroke="#e88888" stroke-width="2.2"/><path d="M581 47L586 46.5L587 50.5" stroke="#e88888" stroke-width="2" fill="none"/><path d="M572 58.5H579M575.5 55V62" stroke="#333" stroke-width="1"/><path d="M617.5 30.5H637.5L638.5 31.5V53H617.5Z" fill="#f6f6f6" stroke="#d0d0d0"/><path d="M621 37H634M621 40H634M621 43H634M621 46H634" stroke="#dcdcdc"/><path d="M626 36.5H646.5V56.5L641.5 61.5H626Z" fill="#f0f0f0" stroke="#c4c4c4"/><path d="M630 43H643M630 45.5H643M630 48H643M630 51H642" stroke="#c8c8c8"/><path d="M641.5 61.5V56.5H646.5" fill="#ddd" stroke="#bbb"/><path d="M618 57.5H625M621.5 54V61" stroke="#333" stroke-width="1"/><rect x="664.5" y="32.5" width="26" height="28" rx="1" fill="#c88c1c" stroke="#a06a10"/><rect x="667.5" y="34.5" width="20" height="24" fill="#fafafa"/><rect x="671" y="30" width="13" height="5" rx="1" fill="#8a8a80" stroke="#6a6a60" stroke-width="0.8"/><path d="M670 40H686M670 43H686M670 46H685M670 49H686M670 52H680" stroke="#bdbdbd"/><path d="M683 58.5L687.5 54V58.5Z" fill="#999"/><path d="M722 56.5H744" stroke="#ff1010" stroke-width="1.3"/><g transform="translate(723.3,55.3) rotate(-45.5)"><path d="M0 0L5.5 -3H20.5V3H5.5Z" fill="#e82818" stroke="#7a4010" stroke-width="0.8" stroke-linejoin="round"/><path d="M5.5 -3H20.5V-0.8H5.5Z" fill="#f05830"/><path d="M0 0L5.5 -3V3Z" fill="#f0d0b0" stroke="#7a4010" stroke-width="0.6"/><path d="M0 0L2 -1.1V1.1Z" fill="#111"/><rect x="20.5" y="-3" width="1.8" height="6" fill="#d8d8d8"/><path d="M22.3 -3H23.5Q26 -3 26 0Q26 3 23.5 3H22.3Z" fill="#f02020" stroke="#7a4010" stroke-width="0.7"/></g><rect x="765" y="35.5" width="28.5" height="21" fill="#000c80" stroke="#001"/><path d="M768.5 53.5L789.5 39.5V53.5Z" fill="none" stroke="#fff" stroke-width="1.4" stroke-dasharray="2.2 1.4"/><circle cx="825" cy="45.8" r="12.7" fill="none" stroke="#000" stroke-width="2"/><path d="M811 59.7L839 31.8" stroke="#1020ff" stroke-width="1.1"/><path d="M868.9 32.9h2.4v2.4h-2.4zM868.9 40.9h2.4v2.4h-2.4zM868.9 48.9h2.4v2.4h-2.4zM868.9 56.9h2.4v2.4h-2.4zM876.9 32.9h2.4v2.4h-2.4zM876.9 40.9h2.4v2.4h-2.4zM876.9 48.9h2.4v2.4h-2.4zM876.9 56.9h2.4v2.4h-2.4zM884.9 32.9h2.4v2.4h-2.4zM884.9 40.9h2.4v2.4h-2.4zM884.9 48.9h2.4v2.4h-2.4zM884.9 56.9h2.4v2.4h-2.4zM892.9 32.9h2.4v2.4h-2.4zM892.9 40.9h2.4v2.4h-2.4zM892.9 48.9h2.4v2.4h-2.4zM892.9 56.9h2.4v2.4h-2.4z" fill="#000"/><ellipse cx="939.5" cy="55.3" rx="10" ry="2.5" fill="#000" opacity="0.05"/><path d="M944.0 50.8L950.0 56.8" stroke="#666" stroke-width="3.6" stroke-linecap="round"/><path d="M944.0 50.8L950.0 56.8" stroke="#b0b0b0" stroke-width="1" stroke-linecap="round" opacity="0.6"/><circle cx="935.5" cy="41.8" r="11" fill="#f4f4ec" stroke="#c4c4b4" stroke-width="1"/><circle cx="935.5" cy="41.8" r="9.2" fill="url(#zb)" stroke="#8aa8d0" stroke-width="0.6"/><path d="M929 41.8H942M935.5 35.3V48.3" stroke="#3a6aa8" stroke-width="4.4"/><path d="M929.8 41.8H941.2M935.5 36.1V47.5" stroke="#fff" stroke-width="2.6"/><ellipse cx="985.5" cy="55.3" rx="10" ry="2.5" fill="#000" opacity="0.05"/><path d="M990.0 50.8L996.0 56.8" stroke="#666" stroke-width="3.6" stroke-linecap="round"/><path d="M990.0 50.8L996.0 56.8" stroke="#b0b0b0" stroke-width="1" stroke-linecap="round" opacity="0.6"/><circle cx="981.5" cy="41.8" r="11" fill="#f4f4ec" stroke="#c4c4b4" stroke-width="1"/><circle cx="981.5" cy="41.8" r="9.2" fill="url(#zb)" stroke="#8aa8d0" stroke-width="0.6"/><path d="M975 41.8H988" stroke="#3a6aa8" stroke-width="4.4"/><path d="M975.8 41.8H987.2" stroke="#fff" stroke-width="2.6"/><ellipse cx="1031" cy="55.0" rx="10" ry="2.5" fill="#000" opacity="0.05"/><path d="M1035.5 50.5L1041.5 56.5" stroke="#666" stroke-width="3.6" stroke-linecap="round"/><path d="M1035.5 50.5L1041.5 56.5" stroke="#b0b0b0" stroke-width="1" stroke-linecap="round" opacity="0.6"/><circle cx="1027" cy="41.5" r="11" fill="#f4f4ec" stroke="#c4c4b4" stroke-width="1"/><circle cx="1027" cy="41.5" r="9.2" fill="url(#zb)" stroke="#8aa8d0" stroke-width="0.6"/><path d="M1021.5 39V36H1024.5M1029.5 36H1032.5V39M1032.5 44V47H1029.5M1024.5 47H1021.5V44" stroke="#fff" stroke-width="1.8" fill="none"/><rect x="1024" y="38.5" width="6" height="6" fill="#9ab8e0"/><ellipse cx="1077.3" cy="55.0" rx="10" ry="2.5" fill="#000" opacity="0.05"/><path d="M1081.8 50.5L1087.8 56.5" stroke="#aaa" stroke-width="3.6" stroke-linecap="round"/><path d="M1081.8 50.5L1087.8 56.5" stroke="#b0b0b0" stroke-width="1" stroke-linecap="round" opacity="0.6"/><circle cx="1073.3" cy="41.5" r="11" fill="#f4f4ec" stroke="#c4c4b4" stroke-width="1"/><circle cx="1073.3" cy="41.5" r="9.2" fill="url(#zr)" stroke="#8aa8d0" stroke-width="0.6"/><path d="M1067.8 39V36H1070.8M1075.8 36H1078.8V39M1078.8 44V47H1075.8M1070.8 47H1067.8V44" stroke="#f06060" stroke-width="1.8" fill="none"/><ellipse cx="1123.2" cy="55.0" rx="10" ry="2.5" fill="#000" opacity="0.05"/><path d="M1127.7 50.5L1133.7 56.5" stroke="#666" stroke-width="3.6" stroke-linecap="round"/><path d="M1127.7 50.5L1133.7 56.5" stroke="#b0b0b0" stroke-width="1" stroke-linecap="round" opacity="0.6"/><circle cx="1119.2" cy="41.5" r="11" fill="#f4f4ec" stroke="#c4c4b4" stroke-width="1"/><circle cx="1119.2" cy="41.5" r="9.2" fill="url(#zb)" stroke="#8aa8d0" stroke-width="0.6"/><path d="M1112 41.5L1119 35.8V39H1126.5V44H1119V47.2Z" fill="#fff" stroke="#3a6aa8" stroke-width="0.6"/><rect x="1153.5" y="30.5" width="27" height="17.5" fill="#fff" stroke="#6a90c8"/><ellipse cx="1171" cy="58.3" rx="10" ry="2.5" fill="#000" opacity="0.05"/><path d="M1175.5 53.8L1181.5 59.8" stroke="#666" stroke-width="3.6" stroke-linecap="round"/><path d="M1175.5 53.8L1181.5 59.8" stroke="#b0b0b0" stroke-width="1" stroke-linecap="round" opacity="0.6"/><circle cx="1167" cy="44.8" r="11" fill="#f4f4ec" stroke="#c4c4b4" stroke-width="1"/><circle cx="1167" cy="44.8" r="9.2" fill="url(#zb)" stroke="#8aa8d0" stroke-width="0.6"/><path d="M1159 46H1175" stroke="#a8c4ea" stroke-width="1.5"/><ellipse cx="1216" cy="56.2" rx="10" ry="2.5" fill="#000" opacity="0.05"/><path d="M1220.5 51.7L1226.5 57.7" stroke="#666" stroke-width="3.6" stroke-linecap="round"/><path d="M1220.5 51.7L1226.5 57.7" stroke="#b0b0b0" stroke-width="1" stroke-linecap="round" opacity="0.6"/><circle cx="1212" cy="42.7" r="11" fill="#f4f4ec" stroke="#c4c4b4" stroke-width="1"/><circle cx="1212" cy="42.7" r="9.2" fill="url(#zb)" stroke="#8aa8d0" stroke-width="0.6"/><path d="M1212 33.5V52M1203 42.7H1221" stroke="#3a6aa8" stroke-width="3.2"/><path d="M1212 33.5V52M1203 42.7H1221" stroke="#fff" stroke-width="2"/><path d="M1212 30L1208.2 34.5H1215.8ZM1212 55.6L1208.2 51H1215.8ZM1199 42.7L1203.5 38.9V46.5ZM1225 42.7L1220.5 38.9V46.5Z" fill="#fff" stroke="#3a6aa8" stroke-width="0.7" stroke-linejoin="round"/><path d="M7 77h2v2h-2zM7 83h2v2h-2zM7 89h2v2h-2zM7 95h2v2h-2z" fill="#a4a4a4"/><path d="M68 71h1v1h-1zM68 74h1v1h-1zM68 77h1v1h-1zM68 80h1v1h-1zM68 83h1v1h-1zM68 86h1v1h-1zM68 89h1v1h-1zM68 92h1v1h-1zM68 95h1v1h-1zM68 98h1v1h-1zM68 101h1v1h-1zM68 104h1v1h-1z" fill="#5a5a5a"/><path d="M217 71h1v1h-1zM217 74h1v1h-1zM217 77h1v1h-1zM217 80h1v1h-1zM217 83h1v1h-1zM217 86h1v1h-1zM217 89h1v1h-1zM217 92h1v1h-1zM217 95h1v1h-1zM217 98h1v1h-1zM217 101h1v1h-1zM217 104h1v1h-1z" fill="#5a5a5a"/><path d="M274 71h1v1h-1zM274 74h1v1h-1zM274 77h1v1h-1zM274 80h1v1h-1zM274 83h1v1h-1zM274 86h1v1h-1zM274 89h1v1h-1zM274 92h1v1h-1zM274 95h1v1h-1zM274 98h1v1h-1zM274 101h1v1h-1zM274 104h1v1h-1z" fill="#5a5a5a"/><path d="M377 71h1v1h-1zM377 74h1v1h-1zM377 77h1v1h-1zM377 80h1v1h-1zM377 83h1v1h-1zM377 86h1v1h-1zM377 89h1v1h-1zM377 92h1v1h-1zM377 95h1v1h-1zM377 98h1v1h-1zM377 101h1v1h-1zM377 104h1v1h-1z" fill="#5a5a5a"/><path d="M555 71h1v1h-1zM555 74h1v1h-1zM555 77h1v1h-1zM555 80h1v1h-1zM555 83h1v1h-1zM555 86h1v1h-1zM555 89h1v1h-1zM555 92h1v1h-1zM555 95h1v1h-1zM555 98h1v1h-1zM555 101h1v1h-1zM555 104h1v1h-1z" fill="#5a5a5a"/><path d="M704 71h1v1h-1zM704 74h1v1h-1zM704 77h1v1h-1zM704 80h1v1h-1zM704 83h1v1h-1zM704 86h1v1h-1zM704 89h1v1h-1zM704 92h1v1h-1zM704 95h1v1h-1zM704 98h1v1h-1zM704 101h1v1h-1zM704 104h1v1h-1z" fill="#5a5a5a"/><rect x="14.5" y="72.5" width="43" height="31.5" rx="5" fill="url(#btg)" stroke="#8a8a8a" stroke-width="2"/><defs><linearGradient id="btg" x1="0" y1="0" x2="0" y2="1"><stop offset="0" stop-color="#f4f4f4"/><stop offset="0.5" stop-color="#e4e4e4"/><stop offset="1" stop-color="#f2f2f2"/></linearGradient></defs><rect x="76" y="70" width="42.5" height="36" rx="4" fill="#b5b5b5"/><path d="M26.7 94.2L45.2 82.1" stroke="#111" stroke-width="1.3"/><circle cx="26.7" cy="94.2" r="2" fill="#ff0000"/><circle cx="45.2" cy="82.1" r="2" fill="#ff0000"/><path d="M88 95.5L107 82.5" stroke="#111" stroke-width="1.3"/><circle cx="88" cy="95.5" r="2" fill="#ff0000"/><circle cx="107" cy="82.5" r="2" fill="#ff0000"/><path d="M133 96L155 81" stroke="#111" stroke-width="1.3"/><path d="M129 98.5L132 91.5L136 97Z M159 78.5L156 85.5L152 80Z" fill="#000" stroke="#000" stroke-width="1"/><circle cx="144" cy="88.5" r="2" fill="#ff0000"/><path d="M179.5 95.5L201 81" stroke="#111" stroke-width="1.3"/><path d="M204 79L201 86L197 80.5Z" fill="#000" stroke="#000" stroke-width="1"/><circle cx="179.5" cy="95.5" r="2" fill="#ff0000"/><path d="M236.5 88.5L246.5 78.5" stroke="#f06464" stroke-width="1.2"/><path d="M236.5 88.5L242.5 98.5L252.5 96.5L257.5 91.5L248 87L246.5 78.5" stroke="#444" stroke-width="1" fill="none"/><circle cx="236.5" cy="88.5" r="1.9" fill="#f06464"/><circle cx="246.5" cy="78.5" r="1.9" fill="#f06464"/><path d="M299.5 92.5L295.5 97.5L303.5 100.5L315.5 95" stroke="#444" stroke-width="1" fill="none"/><path transform="translate(296,75)" d="M0 5L0.5 13L8 13L5 10Q7 6 10.5 6.5Q14.5 7.5 14 12Q13 16 8 17.5Q17 17 18.5 11Q19 3 11 1.5Q5 1 2.5 6.5Z" fill="url(#grn)" stroke="#64a878" stroke-width="0.8"/><path d="M291.5 83.5L299.5 92.5" stroke="#f06464" stroke-width="1.2"/><circle cx="291.5" cy="83.5" r="1.9" fill="#f06464"/><circle cx="299.5" cy="92.5" r="1.9" fill="#f06464"/><path d="M345.5 92.5L341.5 97.5L349.5 100.5L361.5 95" stroke="#444" stroke-width="1" fill="none"/><path transform="translate(361,75) scale(-1,1)" d="M0 5L0.5 13L8 13L5 10Q7 6 10.5 6.5Q14.5 7.5 14 12Q13 16 8 17.5Q17 17 18.5 11Q19 3 11 1.5Q5 1 2.5 6.5Z" fill="url(#grn)" stroke="#64a878" stroke-width="0.8"/><path d="M337.5 83.5L345.5 92.5" stroke="#f06464" stroke-width="1.2"/><circle cx="337.5" cy="83.5" r="1.9" fill="#f06464"/><circle cx="345.5" cy="92.5" r="1.9" fill="#f06464"/><rect x="393.5" y="81.5" width="12" height="12.5" rx="3" fill="#fff" stroke="#d8d8d8" stroke-width="1"/><rect x="571.5" y="81.5" width="12" height="12.5" rx="3" fill="#fff" stroke="#d8d8d8" stroke-width="1"/><rect x="475" y="79" width="74" height="19.5" fill="#fff"/><path d="M475 98.5H549" stroke="#c0c0c0"/><rect x="623" y="79" width="73" height="19.5" fill="#fff"/><path d="M623 98.5H696" stroke="#c0c0c0"/><text x="410" y="92.5" font-family="Liberation Sans" font-size="13" letter-spacing="0.7" fill="#1a1a1a">Długość:</text><text x="588" y="92.5" font-family="Liberation Sans" font-size="13" letter-spacing="1.1" fill="#1a1a1a">Kąt:</text></svg>
<div class="a" style="left:1156px;top:108px;width:298px;height:22px;background:linear-gradient(#eeeeee,#e2e2e2 60%,#d6d6d6);border-bottom:1px solid #c2c2c2"></div>
<div class="a" style="left:1156px;top:130px;width:298px;height:27px;background:#b0b0b0"></div>
<div class="a" style="left:1156px;top:131px;width:58px;height:24px;background:linear-gradient(#f0f0f0,#e6e6e6 50%,#eeeeee)"></div>
<div class="a" style="left:1216px;top:131px;width:58px;height:24px;background:linear-gradient(#f0f0f0,#e6e6e6 50%,#eeeeee)"></div>
<div class="a" style="left:1276px;top:131px;width:58px;height:24px;background:linear-gradient(#f0f0f0,#e6e6e6 50%,#eeeeee)"></div>
<div class="a" style="left:1336px;top:131px;width:58px;height:24px;background:linear-gradient(#f0f0f0,#e6e6e6 50%,#eeeeee)"></div>
<div class="a" style="left:1396px;top:131px;width:58px;height:24px;background:linear-gradient(#f0f0f0,#e6e6e6 50%,#eeeeee)"></div>
<span class="a" style="left:1288.5px;top:112px;font-size:12px;line-height:14px;color:#1e1e1e;letter-spacing:0.1px">Lista warstw</span>
<span class="a" style="left:1183px;top:160px;font-size:13px;line-height:15px;color:#111">0</span>
<div class="a" style="left:1454px;top:108px;width:1px;height:690px;background:#c6c6c6"></div>
<div class="a" style="left:1455px;top:108px;width:45px;height:690px;background:linear-gradient(90deg,#eeeeee,#dcdcdc 55%,#c6c6c6 95%,#b4b4b4)"></div>
<svg class="a" style="left:0;top:0" width="1500" height="844"><circle cx="1164" cy="118" r="7" fill="#707070"/><path d="M1161 115L1167 121M1167 115L1161 121" stroke="#fff" stroke-width="1.8"/><circle cx="1182" cy="118" r="7" fill="#707070"/><rect x="1180.5" y="114" width="5" height="4.5" fill="none" stroke="#fff" stroke-width="1.1"/><rect x="1178.5" y="116.5" width="5" height="4.5" fill="#707070" stroke="#fff" stroke-width="1.1"/><path d="M1177.4 142.8Q1179 136.9 1185 136.9Q1191 136.9 1192.6 142.8Q1190 148.1 1185 148.1Q1180 148.1 1177.4 142.8Z" fill="#000"/><path d="M1179.7 143.3Q1185 137.5 1190.3 143.3Q1185 149.3 1179.7 143.3Z" fill="#fff"/><circle cx="1185" cy="142.3" r="2.7" fill="#000"/><circle cx="1184.1" cy="141.4" r="0.7" fill="#fff" opacity="0.6"/><path d="M1237.4 142.8Q1239 136.9 1245 136.9Q1251 136.9 1252.6 142.8Q1250 148.1 1245 148.1Q1240 148.1 1237.4 142.8Z" fill="#9a9a9a"/><path d="M1239.7 143.3Q1245 137.5 1250.3 143.3Q1245 149.3 1239.7 143.3Z" fill="#fff"/><circle cx="1245" cy="142.3" r="2.7" fill="#9a9a9a"/><circle cx="1244.1" cy="141.4" r="0.7" fill="#fff" opacity="0.6"/><path d="M1300 142.5H1310M1305 137.5V147.5" stroke="#ee0000" stroke-width="3"/><path d="M1360 142.5H1370" stroke="#ee0000" stroke-width="3"/><g transform="translate(1418.5,150) rotate(-43)"><path d="M0 0L3.5 -1.7H16.5V1.7H3.5Z" fill="#e0a840" stroke="#8a5a10" stroke-width="0.6"/><path d="M3.5 -1.7H16.5V-0.3H3.5Z" fill="#f4cc70"/><path d="M16.5 -1.7H18.5Q19.5 -1.7 19.5 0Q19.5 1.7 18.5 1.7H16.5Z" fill="#e81818"/><path d="M0 0L1.8 -0.9V0.9Z" fill="#222"/></g><g transform="translate(1395,174) rotate(-43)"><path d="M0 0L3.5 -1.7H16.5V1.7H3.5Z" fill="#e0a840" stroke="#8a5a10" stroke-width="0.6"/><path d="M3.5 -1.7H16.5V-0.3H3.5Z" fill="#f4cc70"/><path d="M16.5 -1.7H18.5Q19.5 -1.7 19.5 0Q19.5 1.7 18.5 1.7H16.5Z" fill="#e81818"/><path d="M0 0L1.8 -0.9V0.9Z" fill="#222"/></g><path d="M1414.9 167.3Q1416.5 161.4 1422.5 161.4Q1428.5 161.4 1430.1 167.3Q1427.5 172.6 1422.5 172.6Q1417.5 172.6 1414.9 167.3Z" fill="#000"/><path d="M1417.2 167.8Q1422.5 162 1427.8 167.8Q1422.5 173.8 1417.2 167.8Z" fill="#fff"/><circle cx="1422.5" cy="166.8" r="2.7" fill="#000"/><circle cx="1421.6" cy="165.9" r="0.7" fill="#fff" opacity="0.6"/><path d="M1441.5 167V163Q1441.5 159.5 1445 159.5Q1448.5 159.5 1448.5 163V167" fill="none" stroke="#bdbdbd" stroke-width="1.8"/><rect x="1440" y="166" width="10" height="8" rx="1" fill="#bdbdbd"/><rect x="1161.5" y="163.5" width="15" height="8" fill="none" stroke="#000" stroke-width="1.1"/><path d="M1463 116h1.6v1.6h-1.6zM1469 116h1.6v1.6h-1.6zM1475 116h1.6v1.6h-1.6zM1481 116h1.6v1.6h-1.6zM1487 116h1.6v1.6h-1.6z" fill="#9a9a9a"/><rect x="1456" y="121" width="43" height="42" rx="5" fill="#b9b9b9"/><rect x="1456" y="417" width="43" height="42" rx="5" fill="#b9b9b9"/><path d="M1457 261h1v1h-1zM1460 261h1v1h-1zM1463 261h1v1h-1zM1466 261h1v1h-1zM1469 261h1v1h-1zM1472 261h1v1h-1zM1475 261h1v1h-1zM1478 261h1v1h-1zM1481 261h1v1h-1zM1484 261h1v1h-1zM1487 261h1v1h-1zM1490 261h1v1h-1zM1493 261h1v1h-1zM1496 261h1v1h-1z" fill="#777"/><path d="M1457 408h1v1h-1zM1460 408h1v1h-1zM1463 408h1v1h-1zM1466 408h1v1h-1zM1469 408h1v1h-1zM1472 408h1v1h-1zM1475 408h1v1h-1zM1478 408h1v1h-1zM1481 408h1v1h-1zM1484 408h1v1h-1zM1487 408h1v1h-1zM1490 408h1v1h-1zM1493 408h1v1h-1zM1496 408h1v1h-1z" fill="#777"/><rect x="1463.5" y="127.5" width="27.5" height="27.5" fill="#fff" stroke="#222" stroke-width="1"/><rect x="1463.5" y="127.5" width="27.5" height="5" fill="#000"/><rect x="1464.6" y="128.6" width="3" height="3" fill="#fff"/><path d="M1471 140L1476 137V150L1471 152Z" fill="#888" stroke="#444" stroke-width="0.6"/><path d="M1474 138L1484 134V146L1474 150Z" fill="#f4f4f4" stroke="#555" stroke-width="0.7"/><path d="M1477 146L1480 139L1482 145Z" fill="none" stroke="#e02020" stroke-width="0.8"/><rect x="1463.5" y="174.5" width="27.5" height="27.5" fill="#fff" stroke="#222" stroke-width="1"/><rect x="1463.5" y="174.5" width="27.5" height="5" fill="#000"/><rect x="1464.6" y="175.6" width="3" height="3" fill="#fff"/><rect x="1470" y="184.5" width="11" height="7.5" fill="#f4e8c0" stroke="#555" stroke-width="0.7"/><circle cx="1478.5" cy="190.5" r="4.5" fill="#f4e8c0" fill-opacity="0.8" stroke="#555" stroke-width="0.7"/><rect x="1463.5" y="220.5" width="27.5" height="27.5" fill="#fff" stroke="#222" stroke-width="1"/><rect x="1463.5" y="220.5" width="27.5" height="5" fill="#000"/><rect x="1464.6" y="221.6" width="3" height="3" fill="#fff"/><rect x="1468.5" y="229.5" width="18" height="12" rx="2" fill="#eef2f8" stroke="#b8c8e0" stroke-width="0.8"/><rect x="1463.5" y="276.5" width="27.5" height="27.5" fill="#fff" stroke="#222" stroke-width="1"/><rect x="1463.5" y="276.5" width="27.5" height="5" fill="#000"/><rect x="1464.6" y="277.6" width="3" height="3" fill="#fff"/><path d="M1468 284h3v3h-3zM1468 290h3v3h-3zM1468 296h3v3h-3z" fill="#000"/><path d="M1473.5 284.5h11v2.5h-11zM1473.5 290.5h11v2.5h-11zM1473.5 296.5h11v2.5h-11z" fill="none" stroke="#222" stroke-width="0.8"/><rect x="1463.5" y="322.5" width="27.5" height="27.5" fill="#fff" stroke="#222" stroke-width="1"/><rect x="1463.5" y="322.5" width="27.5" height="5" fill="#000"/><rect x="1464.6" y="323.6" width="3" height="3" fill="#fff"/><path d="M1470 332H1484L1478.5 339V346L1475.5 344.5V339Z" fill="#c8c8c8" stroke="#555" stroke-width="0.8"/><ellipse cx="1477" cy="332.5" rx="7" ry="1.5" fill="#999"/><rect x="1463.5" y="368.5" width="27.5" height="27.5" fill="#fff" stroke="#222" stroke-width="1"/><rect x="1463.5" y="368.5" width="27.5" height="5" fill="#000"/><rect x="1464.6" y="369.6" width="3" height="3" fill="#fff"/><path d="M1470 376L1474 380H1478V390H1474L1470 394Z" fill="#f0f0f0" stroke="#333" stroke-width="0.8"/><rect x="1478" y="379" width="8" height="12" fill="#aaa" stroke="#444" stroke-width="0.7"/><path d="M1466 385H1489" stroke="#f09090" stroke-width="0.8" stroke-dasharray="1.5 1"/><rect x="1463.5" y="424.5" width="27.5" height="27.5" fill="#fff" stroke="#222" stroke-width="1"/><rect x="1463.5" y="424.5" width="27.5" height="5" fill="#000"/><rect x="1464.6" y="425.6" width="3" height="3" fill="#fff"/><path d="M1467 432H1474M1467 436H1476M1467 440H1476M1467 444H1477" stroke="#888" stroke-width="0.8"/><path d="M1464 448H1490" stroke="#222" stroke-width="0.7"/><text x="1466" y="451" font-size="3.5" font-family="Liberation Sans" fill="#222">c   command</text><rect x="1463.5" y="470.5" width="27.5" height="27.5" fill="#fff" stroke="#222" stroke-width="1"/><rect x="1463.5" y="470.5" width="27.5" height="5" fill="#000"/><rect x="1464.6" y="471.6" width="3" height="3" fill="#fff"/><rect x="1469.5" y="480.5" width="15" height="14" fill="#c88c1c" stroke="#a06a10" stroke-width="0.7"/><rect x="1471.5" y="482" width="11" height="11" fill="#f4f4f4"/><rect x="1474" y="478.5" width="6" height="3" fill="#888"/></svg>

</body></html>
